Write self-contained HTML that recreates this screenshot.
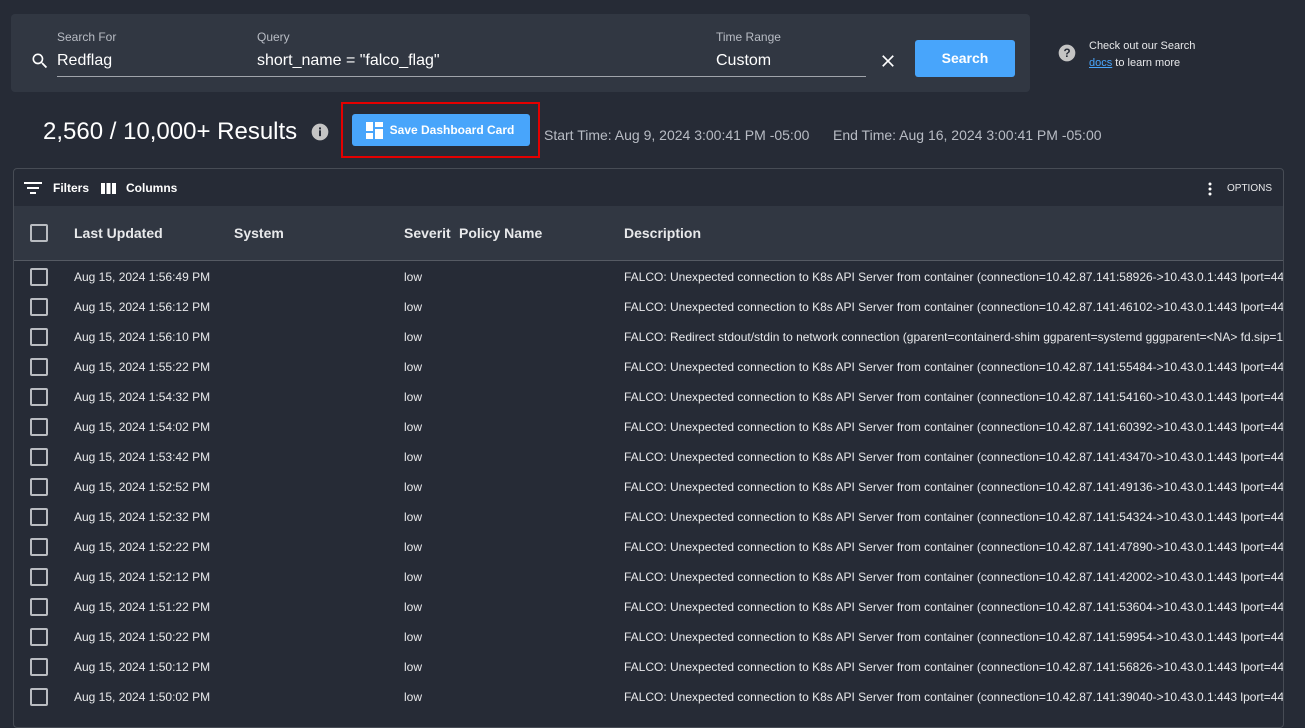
<!DOCTYPE html>
<html><head><meta charset="utf-8"><style>
*{box-sizing:border-box;margin:0;padding:0}
body{width:1305px;height:711px;overflow:hidden;background:#262b36;font-family:"Liberation Sans",sans-serif;color:#fff;position:relative}
.abs{position:absolute;white-space:nowrap}
.panel{position:absolute;left:11px;top:14px;width:1019px;height:78px;background:#313742;border-radius:4px}
.lbl{font-size:12px;color:#b8bcc4}
.val{font-size:16px;color:#fff}
.line{position:absolute;height:1px;background:#a0a4ab}
.btn{position:absolute;background:#48a5fb;border-radius:3px;color:#fff;font-weight:bold;text-align:center}
.table{position:absolute;left:13px;top:168px;width:1271px;height:560px;border:1px solid #474c55;border-radius:4px;overflow:hidden}
.hdr{position:absolute;left:0;top:37px;width:100%;height:55px;background:#313742;border-bottom:1px solid #555a63}
.cb{position:absolute;width:18px;height:18px;border:2px solid #b9bcc1;border-radius:2px}
.row{position:absolute;left:0;width:100%;height:30px;font-size:12px;color:#e8e9eb}
.row span{position:absolute;top:8px;white-space:nowrap}
.h{position:absolute;top:19px;font-size:14px;font-weight:bold;color:#e8e9eb}
</style></head><body>
<div class="panel"></div>
<svg class="abs" style="left:30px;top:51px" width="20" height="20" viewBox="0 0 24 24"><path fill="#fff" d="M15.5 14h-.79l-.28-.27A6.470 6.470 0 0 0 16 9.5 6.5 6.5 0 1 0 9.5 16c1.610 0 3.090-.59 4.230-1.570l.27.28v.79l5 4.990L20.490 19l-4.990-5zm-6 0C7.010 14 5 11.990 5 9.5S7.010 5 9.5 5 14 7.010 14 9.5 11.990 14 9.5 14z"/></svg>
<div class="abs lbl" style="left:57px;top:30px">Search For</div>
<div class="abs val" style="left:57px;top:52px">Redflag</div>
<div class="abs lbl" style="left:257px;top:30px">Query</div>
<div class="abs val" style="left:257px;top:52px">short_name = "falco_flag"</div>
<div class="abs lbl" style="left:716px;top:30px">Time Range</div>
<div class="abs val" style="left:716px;top:52px">Custom</div>
<div class="line" style="left:57px;top:76px;width:809px"></div>
<svg class="abs" style="left:878px;top:51px" width="20" height="20" viewBox="0 0 24 24"><path fill="#fff" d="M19 6.41 17.59 5 12 10.59 6.41 5 5 6.41 10.59 12 5 17.59 6.41 19 12 13.41 17.59 19 19 17.59 13.41 12z"/></svg>
<div class="btn" style="left:915px;top:40px;width:100px;height:37px;line-height:36px;font-size:14px">Search</div>
<svg class="abs" style="left:1057px;top:43px" width="20" height="20" viewBox="0 0 24 24"><circle cx="12" cy="12" r="10" fill="#c4c4c4"/><text x="12" y="17" font-size="14" font-weight="bold" text-anchor="middle" fill="#262b36" font-family="Liberation Sans">?</text></svg>
<div class="abs" style="left:1089px;top:38px;font-size:11px;line-height:17px;color:#e8e9eb">Check out our Search<br><span style="color:#48a5fb;text-decoration:underline">docs</span> to learn more</div>
<div class="abs" style="left:43px;top:118px;font-size:24px;color:#fff">2,560 / 10,000+ Results</div>
<svg class="abs" style="left:310px;top:122px" width="20" height="20" viewBox="0 0 24 24"><circle cx="12" cy="12" r="10" fill="#c4c4c4"/><rect x="10.8" y="10" width="2.4" height="7" fill="#262b36"/><rect x="10.8" y="6.5" width="2.4" height="2.4" fill="#262b36"/></svg>
<div class="abs" style="left:341px;top:102px;width:199px;height:56px;border:2px solid #e40000"></div>
<div class="btn" style="left:352px;top:114px;width:178px;height:32px;line-height:32px;font-size:12px;padding-left:22px">Save Dashboard Card</div>
<svg class="abs" style="left:366px;top:122px" width="18" height="17" viewBox="0 0 18 17"><rect x="0" y="0" width="7" height="9" fill="#fff"/><rect x="0" y="11" width="7" height="6" fill="#fff"/><rect x="9" y="0" width="8" height="5" fill="#fff"/><rect x="9" y="7" width="8" height="10" fill="#fff"/></svg>
<div class="abs" style="left:544px;top:127px;font-size:14px;color:#b8bcc4">Start Time: Aug 9, 2024 3:00:41 PM -05:00</div>
<div class="abs" style="left:833px;top:127px;font-size:14px;color:#b8bcc4">End Time: Aug 16, 2024 3:00:41 PM -05:00</div>
<div class="table">
<svg class="abs" style="left:10px;top:12px" width="18" height="14" viewBox="0 0 18 14"><rect x="0" y="1" width="18" height="2" fill="#fff"/><rect x="3" y="6" width="12" height="2" fill="#fff"/><rect x="6" y="11" width="6" height="2" fill="#fff"/></svg>
<div class="abs" style="left:39px;top:12px;font-size:12px;font-weight:bold">Filters</div>
<svg class="abs" style="left:87px;top:14px" width="15" height="11" viewBox="0 0 15 11"><rect x="0" y="0" width="4" height="11" fill="#fff"/><rect x="5.5" y="0" width="4" height="11" fill="#fff"/><rect x="11" y="0" width="4" height="11" fill="#fff"/></svg>
<div class="abs" style="left:112px;top:12px;font-size:12px;font-weight:bold">Columns</div>
<svg class="abs" style="left:1194px;top:13px" width="4" height="14" viewBox="0 0 4 14"><circle cx="2" cy="2" r="1.5" fill="#fff"/><circle cx="2" cy="7" r="1.5" fill="#fff"/><circle cx="2" cy="12" r="1.5" fill="#fff"/></svg>
<div class="abs" style="left:1213px;top:14px;font-size:10px;color:#e8e9eb">OPTIONS</div>
<div class="hdr">
<div class="cb" style="left:16px;top:18px"></div>
<div class="h" style="left:60px">Last Updated</div>
<div class="h" style="left:220px">System</div>
<div class="h" style="left:390px">Severit</div>
<div class="h" style="left:445px">Policy Name</div>
<div class="h" style="left:610px">Description</div>
</div>
<div id="rows"></div>
</div>
<script>
(function(){
var t=["1:56:49","1:56:12","1:56:10","1:55:22","1:54:32","1:54:02","1:53:42","1:52:52","1:52:32","1:52:22","1:52:12","1:51:22","1:50:22","1:50:12","1:50:02"];
var p=["58926","46102","","55484","54160","60392","43470","49136","54324","47890","42002","53604","59954","56826","39040"];
var h="";
for(var i=0;i<t.length;i++){var yy=93+i*30;
var d=i==2?"FALCO: Redirect stdout/stdin to network connection (gparent=containerd-shim ggparent=systemd gggparent=&lt;NA&gt; fd.sip=10.43.0.1":"FALCO: Unexpected connection to K8s API Server from container (connection=10.42.87.141:"+p[i]+"-&gt;10.43.0.1:443 lport=443";
h+='<div class="row" style="top:'+yy+'px"><div class="cb" style="left:16px;top:6px"></div><span style="left:60px">Aug 15, 2024 '+t[i]+' PM</span><span style="left:390px">low</span><span style="left:610px;width:660px;overflow:hidden">'+d+'</span></div>';}
document.getElementById("rows").innerHTML=h;
})();
</script>
</body></html>
